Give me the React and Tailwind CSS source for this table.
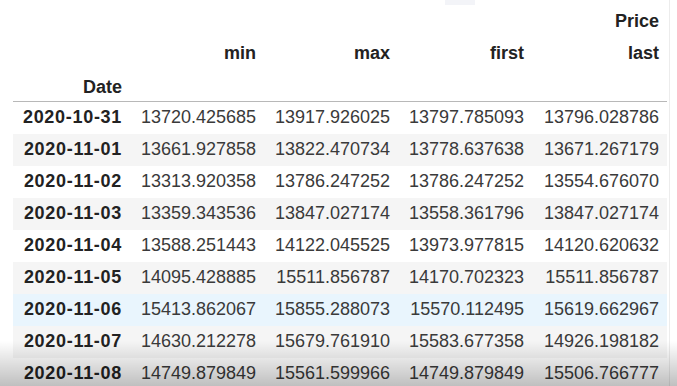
const rows = [
  ["2020-10-31", "13720.425685", "13917.926025", "13797.785093", "13796.028786"],
  ["2020-11-01", "13661.927858", "13822.470734", "13778.637638", "13671.267179"],
  ["2020-11-02", "13313.920358", "13786.247252", "13786.247252", "13554.676070"],
  ["2020-11-03", "13359.343536", "13847.027174", "13558.361796", "13847.027174"],
  ["2020-11-04", "13588.251443", "14122.045525", "13973.977815", "14120.620632"],
  ["2020-11-05", "14095.428885", "15511.856787", "14170.702323", "15511.856787"],
  ["2020-11-06", "15413.862067", "15855.288073", "15570.112495", "15619.662967"],
  ["2020-11-07", "14630.212278", "15679.761910", "15583.677358", "14926.198182"],
  ["2020-11-08", "14749.879849", "15561.599966", "14749.879849", "15506.766777"],
];

const App = () => {
  return (
    <div
      className="relative w-[677px] h-[386px] overflow-hidden bg-white"
      style={{ fontFamily: '"Liberation Sans", Arial, sans-serif' }}
    >
      <div className="pl-[13px] pt-[5px] w-[670px] h-full border-r border-[#ececec]">
        <table className="border-collapse text-[18px] text-[#3a3a3a]">
          <thead className="font-bold text-[#222]">
            {/* multi-index header */}
            <tr className="h-[32px]">
              <th className="w-[117px]"></th>
              <th className="w-[134px]"></th>
              <th className="w-[134px]"></th>
              <th className="w-[134px]"></th>
              <th className="w-[135px] text-right pr-[8px]">Price</th>
            </tr>
            <tr className="h-[32px]">
              <th></th>
              <th className="text-right pr-[8px]">min</th>
              <th className="text-right pr-[8px]">max</th>
              <th className="text-right pr-[8px]">first</th>
              <th className="text-right pr-[8px]">last</th>
            </tr>
            <tr className="h-[32px] border-b border-[#b8b8b8]">
              <th className="text-right pr-[8px] pt-[5px]">Date</th>
              <th></th>
              <th></th>
              <th></th>
              <th></th>
            </tr>
          </thead>
          <tbody>
            {rows.map((r, i) => (
              <tr
                key={r[0]}
                className={`h-[32px] ${
                  i === 6 ? "bg-[#e9f5fd]" : i % 2 === 1 ? "bg-[#f5f5f5]" : ""
                }`}
              >
                <th className="text-right pr-[8px] font-bold text-[#222] tracking-[0.7px]">
                  {r[0]}
                </th>
                {r.slice(1).map((v, j) => (
                  <td key={j} className="text-right pr-[8px] font-normal">
                    {v}
                  </td>
                ))}
              </tr>
            ))}
          </tbody>
        </table>
      </div>
      {/* player shade at the bottom */}
      <div className="absolute left-0 right-0 bottom-0 h-[45px] bg-gradient-to-b from-transparent to-black/25 pointer-events-none"></div>
      <div className="absolute top-0 left-[445px] w-[30px] h-[5px] bg-[#f3f4f8]"></div>
    </div>
  );
};

export default App;
